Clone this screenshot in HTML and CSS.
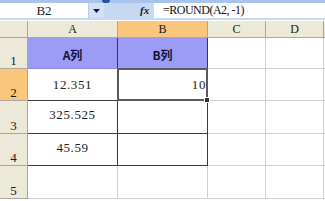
FILE: index.html
```html
<!DOCTYPE html>
<html>
<head>
<meta charset="utf-8">
<link rel="stylesheet" href="styles.css">
</head>
<body>
<div class="app">
  <div class="topstrip"><span class="notch"></span></div>
  <div class="fbar">
    <div class="namebox">B2</div>
    <div class="dd"><svg width="7" height="4" viewBox="0 0 7 4"><path d="M0 0H7L3.5 4Z" fill="#1a1a40"/></svg></div>
    <div class="fgap"></div>
    <div class="fx">fx</div>
    <div class="formula">=ROUND(A2, -1)</div>
  </div>
  <div class="sheet">
    <div class="corner"></div>
    <div class="ch">A</div>
    <div class="ch sel">B</div>
    <div class="ch">C</div>
    <div class="ch">D</div>
    <div class="ch edge"></div>

    <div class="rh">1</div>
    <div class="c t hd">A列</div>
    <div class="c t hd">B列</div>
    <div class="c"></div>
    <div class="c"></div>
    <div class="c edge"></div>

    <div class="rh sel">2</div>
    <div class="c t num">12.351</div>
    <div class="c t num right active">10</div>
    <div class="c"></div>
    <div class="c"></div>
    <div class="c edge"></div>

    <div class="rh">3</div>
    <div class="c t num low">325.525</div>
    <div class="c t"></div>
    <div class="c"></div>
    <div class="c"></div>
    <div class="c edge"></div>

    <div class="rh">4</div>
    <div class="c t num low">45.59</div>
    <div class="c t"></div>
    <div class="c"></div>
    <div class="c"></div>
    <div class="c edge"></div>

    <div class="rh">5</div>
    <div class="c"></div>
    <div class="c"></div>
    <div class="c"></div>
    <div class="c"></div>
    <div class="c edge"></div>
  </div>
</div>
</body>
</html>
```
FILE: styles.css
```css
html, body {
  margin: 0;
  padding: 0;
  background: #ffffff;
}
.app {
  width: 325px;
  height: 201px;
  overflow: hidden;
  font-family: "Liberation Serif", "Noto Sans CJK SC", serif;
}
.topstrip {
  height: 3px;
  background: #a9c4ec;
  position: relative;
}
.notch {
  position: absolute;
  left: 102px;
  top: 0;
  width: 8px;
  height: 3px;
  background: #2a4f9a;
  border-radius: 0 0 3px 3px;
}
.fbar {
  display: flex;
  height: 16px;
  background: #c6d8f2;
  padding-bottom: 1px;
}
.namebox {
  width: 88px;
  height: 15px;
  background: #ffffff;
  font-size: 13px;
  line-height: 15px;
  text-align: center;
  color: #1a1a1a;
}
.dd {
  width: 15px;
  height: 15px;
  background: #d3e1f6;
  display: flex;
  align-items: center;
  justify-content: center;
  border-left: 1px solid #b8cbe8;
}
.fgap {
  width: 36px;
}
.fx {
  width: 14px;
  font-style: italic;
  font-weight: bold;
  font-size: 11px;
  line-height: 15px;
  color: #1a1a1a;
}
.formula {
  flex: 1;
  background: #ffffff;
  height: 15px;
  font-size: 12px;
  line-height: 15px;
  letter-spacing: -0.5px;
  padding-left: 9px;
  color: #111;
}
.sheet {
  display: grid;
  grid-template-columns: 28px 90px 90px 58px 58px 1fr;
  grid-template-rows: 17px 31px 32px 33px 32px 33px 10px;
  margin-top: 1px;
}
.corner, .ch, .rh {
  background: #ece9d8;
  border-right: 1px solid #aca899;
  border-bottom: 1px solid #aca899;
  color: #1a1a1a;
  font-size: 12px;
}
.ch {
  text-align: center;
  line-height: 16px;
}
.ch.sel, .rh.sel {
  background: #f9c67c;
}
.rh {
  display: flex;
  align-items: flex-end;
  justify-content: center;
  line-height: 14px;
  font-size: 13px;
}
.c {
  border-right: 1px solid #d0d0d0;
  border-bottom: 1px solid #d0d0d0;
  display: flex;
  align-items: center;
  justify-content: center;
  position: relative;
}
.c.t {
  border-right-color: #3a3a3a;
  border-bottom-color: #3a3a3a;
}
.c.hd {
  background: #9c9cf6;
  font-family: "Noto Sans CJK SC", sans-serif;
  font-weight: bold;
  font-size: 12px;
  color: #14143a;
  border-bottom-color: #8a8ae0;
  padding-top: 2px;
}
.num {
  font-size: 13px;
  letter-spacing: 0.6px;
  color: #222;
}
.low {
  padding-bottom: 4px;
}
.right {
  justify-content: flex-end;
  padding-right: 1px;
}
.edge {
  border-right: none;
}
.active::after {
  content: "";
  position: absolute;
  left: -1px;
  top: -1px;
  right: -1px;
  bottom: -1px;
  border: 2px solid #5a5a5a;
}
.active::before {
  content: "";
  position: absolute;
  right: -3px;
  bottom: -3px;
  width: 4px;
  height: 4px;
  background: #333;
  border: 1px solid #fff;
  z-index: 2;
}
```
